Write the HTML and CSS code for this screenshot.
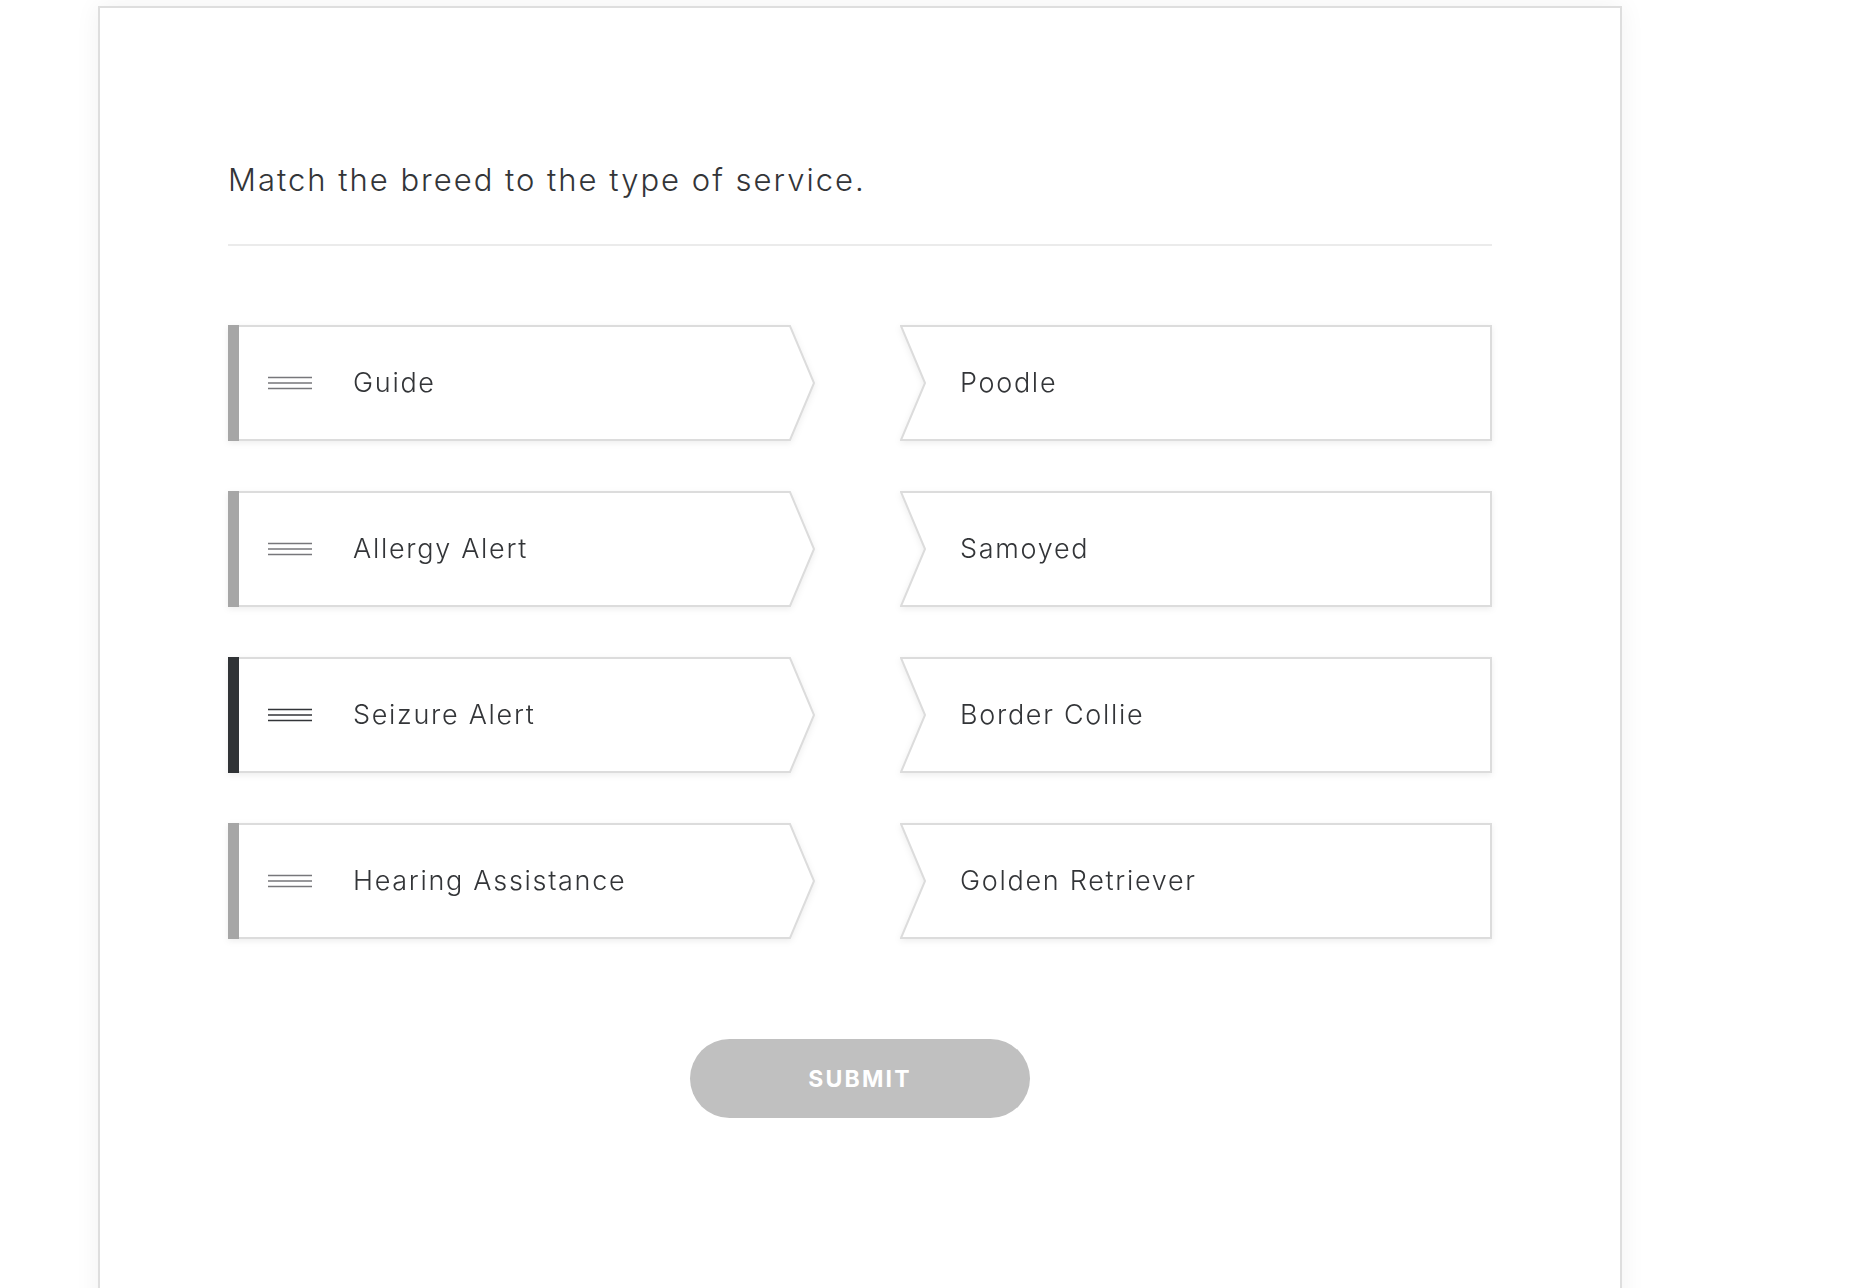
FILE: index.html
```html
<!DOCTYPE html>
<html lang="en">
<head>
<meta charset="utf-8">
<title>Match the breed</title>
<link rel="stylesheet" href="styles.css">
</head>
<body>
<main class="card">
  <h1 class="question">Match the breed to the type of service.</h1>
  <hr class="divider">
  <div class="pairs">
    <div class="drag">
      <span class="bar"></span>
      <div class="drag-body">
        <svg class="handle" width="44" height="14" viewBox="0 0 44 14"><path d="M0 1.5H44M0 7H44M0 12.5H44" stroke="currentColor" stroke-width="1.6"/></svg>
        <span class="label">Guide</span>
      </div>
      <svg class="tip" width="26" height="116" viewBox="0 0 26 116"><polygon points="0,0 1,1 25,58 1,115 0,116" fill="#fff"/><polyline points="0,1 1,1 25,58 1,115 0,115" fill="none" stroke="#dcdcdc" stroke-width="2"/></svg>
    </div>
    <div class="drop">
      <svg class="notch" width="26" height="116" viewBox="0 0 26 116"><polygon points="1,1 26,1 26,115 1,115 25,58" fill="#fff"/><polyline points="26,1 1,1 25,58 1,115 26,115" fill="none" stroke="#dcdcdc" stroke-width="2"/></svg>
      <div class="drop-body"><span class="label">Poodle</span></div>
    </div>

    <div class="drag">
      <span class="bar"></span>
      <div class="drag-body">
        <svg class="handle" width="44" height="14" viewBox="0 0 44 14"><path d="M0 1.5H44M0 7H44M0 12.5H44" stroke="currentColor" stroke-width="1.6"/></svg>
        <span class="label">Allergy Alert</span>
      </div>
      <svg class="tip" width="26" height="116" viewBox="0 0 26 116"><polygon points="0,0 1,1 25,58 1,115 0,116" fill="#fff"/><polyline points="0,1 1,1 25,58 1,115 0,115" fill="none" stroke="#dcdcdc" stroke-width="2"/></svg>
    </div>
    <div class="drop">
      <svg class="notch" width="26" height="116" viewBox="0 0 26 116"><polygon points="1,1 26,1 26,115 1,115 25,58" fill="#fff"/><polyline points="26,1 1,1 25,58 1,115 26,115" fill="none" stroke="#dcdcdc" stroke-width="2"/></svg>
      <div class="drop-body"><span class="label">Samoyed</span></div>
    </div>

    <div class="drag is-active">
      <span class="bar"></span>
      <div class="drag-body">
        <svg class="handle" width="44" height="14" viewBox="0 0 44 14"><path d="M0 1.5H44M0 7H44M0 12.5H44" stroke="currentColor" stroke-width="1.6"/></svg>
        <span class="label">Seizure Alert</span>
      </div>
      <svg class="tip" width="26" height="116" viewBox="0 0 26 116"><polygon points="0,0 1,1 25,58 1,115 0,116" fill="#fff"/><polyline points="0,1 1,1 25,58 1,115 0,115" fill="none" stroke="#dcdcdc" stroke-width="2"/></svg>
    </div>
    <div class="drop">
      <svg class="notch" width="26" height="116" viewBox="0 0 26 116"><polygon points="1,1 26,1 26,115 1,115 25,58" fill="#fff"/><polyline points="26,1 1,1 25,58 1,115 26,115" fill="none" stroke="#dcdcdc" stroke-width="2"/></svg>
      <div class="drop-body"><span class="label">Border Collie</span></div>
    </div>

    <div class="drag">
      <span class="bar"></span>
      <div class="drag-body">
        <svg class="handle" width="44" height="14" viewBox="0 0 44 14"><path d="M0 1.5H44M0 7H44M0 12.5H44" stroke="currentColor" stroke-width="1.6"/></svg>
        <span class="label">Hearing Assistance</span>
      </div>
      <svg class="tip" width="26" height="116" viewBox="0 0 26 116"><polygon points="0,0 1,1 25,58 1,115 0,116" fill="#fff"/><polyline points="0,1 1,1 25,58 1,115 0,115" fill="none" stroke="#dcdcdc" stroke-width="2"/></svg>
    </div>
    <div class="drop">
      <svg class="notch" width="26" height="116" viewBox="0 0 26 116"><polygon points="1,1 26,1 26,115 1,115 25,58" fill="#fff"/><polyline points="26,1 1,1 25,58 1,115 26,115" fill="none" stroke="#dcdcdc" stroke-width="2"/></svg>
      <div class="drop-body"><span class="label">Golden Retriever</span></div>
    </div>
  </div>
  <div class="actions">
    <button class="submit" type="button">SUBMIT</button>
  </div>
</main>
</body>
</html>
```

FILE: styles.css
```css
html, body {
  margin: 0;
  padding: 0;
  background: #ffffff;
}

body {
  font-family: "Inter", "Open Sans", sans-serif;
  color: #333538;
  overflow: hidden;
}

.card {
  box-sizing: border-box;
  width: 1524px;
  min-height: 1400px;
  margin: 6px 0 0 98px;
  border: 2px solid #dedede;
  background: #fff;
  box-shadow: 0 0 24px rgba(0, 0, 0, 0.06);
  padding: 152px 128px 0 128px;
}

.question {
  margin: 0;
  font-size: 31px;
  font-weight: 300;
  line-height: 40px;
  letter-spacing: 2px;
  color: #333538;
}

.divider {
  margin: 44px 0 0 0;
  border: 0;
  height: 2px;
  background: #ebebeb;
}

.pairs {
  display: grid;
  grid-template-columns: 587px 1fr;
  column-gap: 85px;
  row-gap: 50px;
  margin-top: 79px;
}

.drag, .drop {
  display: flex;
  height: 116px;
  filter: drop-shadow(0 2px 3px rgba(0, 0, 0, 0.07));
}

.bar {
  flex: 0 0 11px;
  background: #a6a6a6;
}

.drag.is-active .bar {
  background: #303336;
}

.drag-body {
  flex: 1;
  display: flex;
  align-items: center;
  box-sizing: border-box;
  border-top: 2px solid #dcdcdc;
  border-bottom: 2px solid #dcdcdc;
  background: #fff;
  padding-left: 29px;
}

.handle {
  flex: 0 0 auto;
  color: #77777b;
  margin-right: 41px;
}

.drag.is-active .handle {
  color: #333538;
}

.tip, .notch {
  flex: 0 0 26px;
  display: block;
}

.drop-body {
  flex: 1;
  display: flex;
  align-items: center;
  box-sizing: border-box;
  border-top: 2px solid #dcdcdc;
  border-bottom: 2px solid #dcdcdc;
  border-right: 2px solid #dcdcdc;
  background: #fff;
  padding-left: 34px;
}

.label {
  font-size: 27px;
  font-weight: 300;
  letter-spacing: 1.7px;
  color: #333538;
  position: relative;
  top: -1px;
}

.actions {
  display: flex;
  justify-content: center;
  margin-top: 100px;
}

.submit {
  width: 340px;
  height: 79px;
  border: 0;
  border-radius: 40px;
  background: #c0c0c0;
  color: #ffffff;
  font-family: "Inter", "Open Sans", sans-serif;
  font-size: 23px;
  font-weight: 700;
  letter-spacing: 2.2px;
  padding: 0;
}
```
